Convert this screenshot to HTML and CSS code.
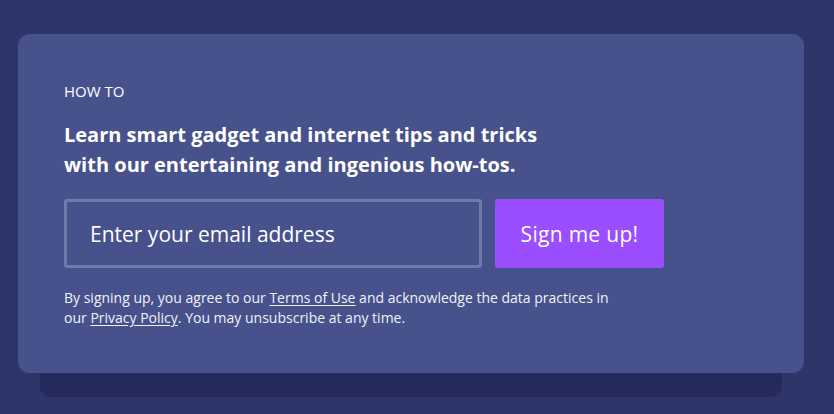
FILE: index.html
```html
<!DOCTYPE html>
<html lang="en">
<head>
<meta charset="utf-8">
<title>How To newsletter</title>
<link rel="stylesheet" href="styles.css">
</head>
<body>
<main class="page">
  <section class="signup">
    <div class="card">
      <p class="eyebrow">HOW TO</p>
      <h2 class="headline">Learn smart gadget and internet tips and tricks<br>with our entertaining and ingenious how-tos.</h2>
      <form class="form">
        <input class="email" type="email" placeholder="Enter your email address">
        <button class="submit" type="button">Sign me up!</button>
      </form>
      <p class="legal">By signing up, you agree to our <a href="#">Terms of Use</a> and acknowledge the data practices in<br>our <a href="#">Privacy Policy</a>. You may unsubscribe at any time.</p>
    </div>
  </section>
</main>
</body>
</html>
```
FILE: styles.css
```css
* { box-sizing: border-box; }
html, body { margin: 0; height: 100%; }
body {
  background: #2e3669;
  font-family: "Open Sans", "Noto Sans", sans-serif;
  color: #ffffff;
}
.page {
  padding: 34px 30px 0 18px;
}
.signup {
  position: relative;
  width: 786px;
}
.signup::before {
  content: "";
  position: absolute;
  left: 22px;
  right: 22px;
  top: 40px;
  bottom: -24px;
  background: #242a5c;
  border-radius: 10px;
}
.card {
  position: relative;
  background: #47528c;
  border-radius: 12px;
  padding: 47px 46px 45px;
}
.eyebrow {
  margin: 0 0 19px;
  font-size: 15px;
  line-height: 20px;
  font-weight: 500;
}
.headline {
  margin: 0 0 19px;
  font-size: 20px;
  line-height: 30px;
  font-weight: 700;
}
.form {
  display: flex;
  gap: 13px;
  margin: 0 0 20px;
}
.email {
  width: 418px;
  height: 69px;
  border: 3px solid #6f79aa;
  border-radius: 3px;
  background: transparent;
  padding: 0 0 0 23px;
  font-family: inherit;
  font-size: 21px;
  color: #ffffff;
  outline: none;
}
.email::placeholder { color: #ffffff; opacity: 1; }
.submit {
  width: 169px;
  height: 69px;
  border: 0;
  border-radius: 3px;
  background: #9a4eff;
  color: #ffffff;
  font-family: inherit;
  font-size: 21px;
  letter-spacing: 0.3px;
  cursor: pointer;
}
.legal {
  margin: 0;
  font-size: 14px;
  line-height: 20px;
  color: #f0f1f8;
}
.legal a {
  color: inherit;
  text-decoration: underline;
  text-underline-offset: 2px;
}
```
